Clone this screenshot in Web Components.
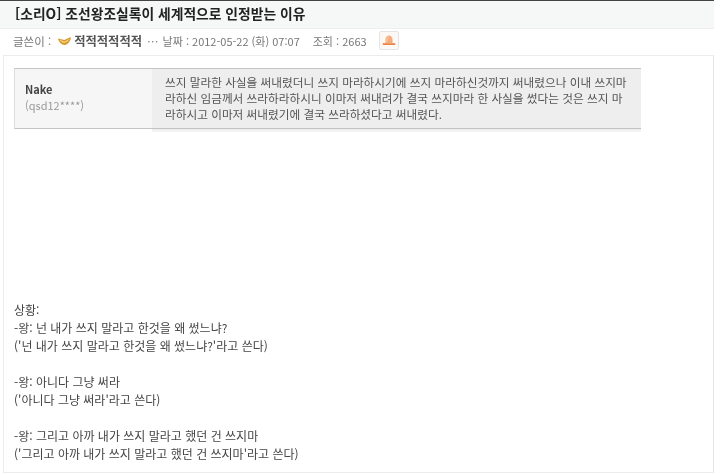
<!DOCTYPE html>
<html lang="ko"><head><meta charset="utf-8">
<style>
html,body{margin:0;padding:0;background:#fff;overflow:hidden}
body{width:720px;height:474px;font-family:"Noto Sans CJK KR","Liberation Sans",sans-serif;color:#444}
</style></head><body>
<post-view>
  <post-title slot="title">[소리O] 조선왕조실록이 세계적으로 인정받는 이유</post-title>
  <post-meta slot="meta"></post-meta>
  <post-body slot="body">
    <quote-box slot="quote" name="Nake" uid="(qsd12****)">쓰지 말라한 사실을 써내렸더니 쓰지 마라하시기에 쓰지 마라하신것까지 써내렸으나 이내 쓰지마<br>라하신 임금께서 쓰라하라하시니 이마저 써내려가 결국 쓰지마라 한 사실을 썼다는 것은 쓰지 마<br>라하시고 이마저 써내렸기에 결국 쓰라하셨다고 써내렸다.</quote-box>
    <text-line>상황:</text-line>
    <text-line>-왕: 넌 내가 쓰지 말라고 한것을 왜 썼느냐?</text-line>
    <text-line>('넌 내가 쓰지 말라고 한것을 왜 썼느냐?'라고 쓴다)</text-line>
    <text-line></text-line>
    <text-line>-왕: 아니다 그냥 써라</text-line>
    <text-line>('아니다 그냥 써라'라고 쓴다)</text-line>
    <text-line></text-line>
    <text-line>-왕: 그리고 아까 내가 쓰지 말라고 했던 건 쓰지마</text-line>
    <text-line>('그리고 아까 내가 쓰지 말라고 했던 건 쓰지마'라고 쓴다)</text-line>
  </post-body>
</post-view>
<script>
function def(name,html,init){
  customElements.define(name,class extends HTMLElement{
    constructor(){super();this.attachShadow({mode:'open'}).innerHTML=html;}
    connectedCallback(){if(init)init(this);}
  });
}
def('post-view',`<style>:host{display:flex;flex-direction:column;width:714px;height:474px;filter:blur(.3px)}</style>
<slot name="title"></slot><slot name="meta"></slot><slot name="body"></slot>`);
def('post-title',`<style>:host{display:flex;align-items:center;box-sizing:border-box;height:29px;padding:0 0 4px 15px;background:#f6f7f7;border-top:1px solid #444;border-bottom:1px solid #eee;font-size:13.8px;font-weight:700;color:#222;white-space:nowrap}</style><slot></slot>`);
def('post-meta',`<style>
:host{display:flex;align-items:center;box-sizing:border-box;height:26px;padding:0 0 3px 13px;font-size:11.5px;color:#777;white-space:nowrap}
.nick{font-weight:700;color:#555;margin-left:3px;font-size:12.3px}
svg{margin-left:7px;display:block}
.ell{margin:0 4px 0 5px}
.date{font-size:11px}
.hit{margin-left:13px;font-size:11px}
.btn{box-sizing:border-box;width:20px;height:19px;margin-left:12px;border:1px solid #e4e4e4;border-radius:2px;background:#fbf8f5;display:flex;align-items:center;justify-content:center}
.btn svg{margin:0}
</style>
<span>글쓴이 :</span>
<svg width="13" height="8" viewBox="0 0 13 8"><path d="M0 1.500 6.300 3 12.800 0C13 3.600 10 7.800 6.600 8 3.500 8 .8 5 0 1.500z" fill="#d99a2e"/><path d="M1.500 2.700C3.500 3.400 5 4.300 6.500 4.500 8.500 4 10 3 11.500 1.800 10.500 3.800 8.500 5.600 6.500 5.800 4.500 5.600 2.800 4.500 1.500 2.700z" fill="#f6d98a"/></svg>
<span class="nick">적적적적적적</span><span class="ell">…</span><span class="date">날짜 : 2012-05-22 (화) 07:07</span><span class="hit">조회 : 2663</span>
<span class="btn"><svg width="14" height="11" viewBox="0 0 14 11"><path d="M3.500 8V4.500C3.500 2.200 5 .5 7 .5S10.500 2.200 10.500 4.500V8z" fill="#f6ab7a"/><path d="M5 7V4.500C5 3.200 5.800 2.200 7 2.200" stroke="#fbd3b6" fill="none"/><path d="M.8 8.200h12.400v1.800H.8z" fill="#ee8244"/></svg></span>`);
def('post-body',`<style>
:host{display:block;box-sizing:border-box;margin-left:3px;height:418px;padding:12px 0 0 10px;border:1px solid #ececec;border-right:1px solid #e4e4e4;font-size:12px;line-height:18px;color:#444;white-space:nowrap}
.gap{height:169px}
</style><slot name="quote"></slot><div class="gap"></div><slot></slot>`);
def('quote-box',`<style>
:host{display:flex;width:627px;height:64px;font-size:11.66px;line-height:16px}
.who{box-sizing:border-box;width:138px;height:61px;padding:13px 0 0 10px;background:#f6f6f6;border-top:1px solid #c4c4c4;border-bottom:1px solid #c4c4c4;border-left:1px solid #ddd;font-size:11px;line-height:15.500px}
b{display:block;font-weight:700;color:#444}
i{display:block;font-style:normal;color:#999}
.txt{box-sizing:border-box;flex:1;height:64px;padding:5px 0 0 13px;background:linear-gradient(#eee 61px,#f3f3f3 61px);border-top:1px solid #c4c4c4;position:relative;color:#555}
.rule{position:absolute;left:0;right:0;top:59px;height:1px;background:#c4c4c4}
</style><div class="who"><b id="n"></b><i id="u"></i></div><div class="txt"><slot></slot><div class="rule"></div></div>`,el=>{
  el.shadowRoot.getElementById('n').textContent=el.getAttribute('name');
  el.shadowRoot.getElementById('u').textContent=el.getAttribute('uid');
});
def('text-line',`<style>:host{display:block;height:18px}</style><slot></slot>`);
</script>
</body></html>
